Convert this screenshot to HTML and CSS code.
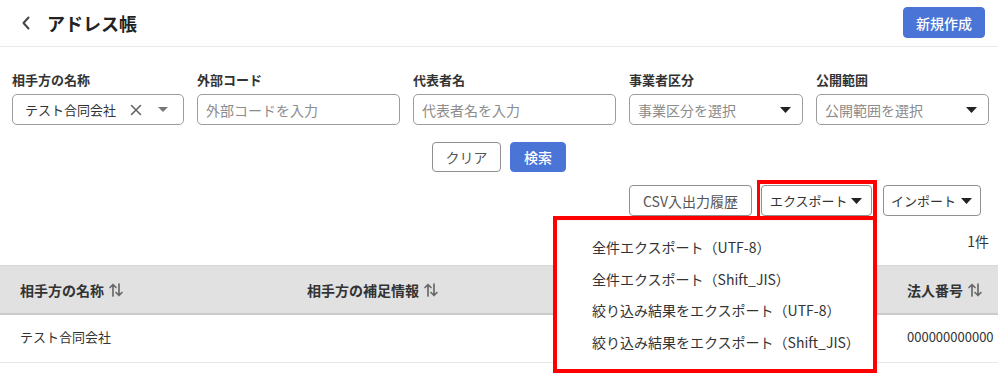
FILE: index.html
```html
<!DOCTYPE html>
<html lang="ja">
<head>
<meta charset="utf-8">
<link rel="stylesheet" href="styles.css">
</head>
<body>
<div class="page">
  <header class="topbar">
    <div class="title-wrap">
      <svg class="back" width="10" height="14" viewBox="0 0 10 14"><path d="M7.5 1.5 L2.5 7 L7.5 12.5" fill="none" stroke="#444" stroke-width="2" stroke-linecap="round" stroke-linejoin="round"/></svg>
      <h1 class="title">アドレス帳</h1>
    </div>
    <button class="btn btn-primary btn-new">新規作成</button>
  </header>

  <section class="filters">
    <div class="field">
      <label class="label">相手方の名称</label>
      <div class="input">
        <span class="value">テスト合同会社</span>
        <svg class="clear-x" width="12" height="12" viewBox="0 0 12 12"><path d="M1.5 1.5 L10.5 10.5 M10.5 1.5 L1.5 10.5" stroke="#666" stroke-width="1.6" stroke-linecap="round"/></svg>
        <svg class="caret caret-light" width="10" height="5" viewBox="0 0 10 5"><path d="M0 0 H10 L5 5 Z" fill="#777"/></svg>
      </div>
    </div>
    <div class="field">
      <label class="label">外部コード</label>
      <div class="input"><span class="ph">外部コードを入力</span></div>
    </div>
    <div class="field">
      <label class="label">代表者名</label>
      <div class="input"><span class="ph">代表者名を入力</span></div>
    </div>
    <div class="field">
      <label class="label">事業者区分</label>
      <div class="input select"><span class="ph">事業区分を選択</span>
        <svg class="caret" width="11" height="6" viewBox="0 0 11 6"><path d="M0 0 H11 L5.5 6 Z" fill="#222"/></svg>
      </div>
    </div>
    <div class="field">
      <label class="label">公開範囲</label>
      <div class="input select"><span class="ph">公開範囲を選択</span>
        <svg class="caret" width="11" height="6" viewBox="0 0 11 6"><path d="M0 0 H11 L5.5 6 Z" fill="#222"/></svg>
      </div>
    </div>
  </section>

  <div class="actions">
    <button class="btn btn-outline btn-clear">クリア</button>
    <button class="btn btn-primary btn-search">検索</button>
  </div>

  <div class="toolbar">
    <button class="btn btn-outline btn-csv">CSV入出力履歴</button>
    <button class="btn btn-outline btn-drop btn-export"><span>エクスポート</span>
      <svg width="11" height="6" viewBox="0 0 11 6"><path d="M0 0 H11 L5.5 6 Z" fill="#222"/></svg>
    </button>
    <button class="btn btn-outline btn-drop btn-import"><span>インポート</span>
      <svg width="11" height="6" viewBox="0 0 11 6"><path d="M0 0 H11 L5.5 6 Z" fill="#222"/></svg>
    </button>
  </div>

  <div class="count">1件</div>

  <div class="table">
    <div class="thead">
      <div class="th">相手方の名称 <svg class="sort" width="16" height="16" viewBox="0 0 16 16"><path d="M5 14 V2.5 M2 5.5 L5 2.5 L8 5.5 M11 2 V13.5 M8 10.5 L11 13.5 L14 10.5" fill="none" stroke="#6a6a6a" stroke-width="1.7" stroke-linecap="round" stroke-linejoin="round"/></svg></div>
      <div class="th">相手方の補足情報 <svg class="sort" width="16" height="16" viewBox="0 0 16 16"><path d="M5 14 V2.5 M2 5.5 L5 2.5 L8 5.5 M11 2 V13.5 M8 10.5 L11 13.5 L14 10.5" fill="none" stroke="#6a6a6a" stroke-width="1.7" stroke-linecap="round" stroke-linejoin="round"/></svg></div>
      <div class="th">法人番号 <svg class="sort" width="16" height="16" viewBox="0 0 16 16"><path d="M5 14 V2.5 M2 5.5 L5 2.5 L8 5.5 M11 2 V13.5 M8 10.5 L11 13.5 L14 10.5" fill="none" stroke="#6a6a6a" stroke-width="1.7" stroke-linecap="round" stroke-linejoin="round"/></svg></div>
    </div>
    <div class="tr">
      <div class="td">テスト合同会社</div>
      <div class="td"></div>
      <div class="td">000000000000</div>
    </div>
  </div>

  <ul class="menu">
    <li>全件エクスポート（UTF-8）</li>
    <li>全件エクスポート（Shift_JIS）</li>
    <li>絞り込み結果をエクスポート（UTF-8）</li>
    <li>絞り込み結果をエクスポート（Shift_JIS）</li>
  </ul>

  <div class="mark mark-btn"></div>
  <div class="mark mark-menu"></div>
</div>
</body>
</html>
```

FILE: styles.css
```css
* { box-sizing: border-box; }
html, body { margin: 0; padding: 0; background: #fff; }
body {
  font-family: "Noto Sans CJK JP", "Noto Sans", sans-serif;
  color: #333;
  font-size: 14px;
  width: 998px;
  height: 381px;
  overflow: hidden;
}
.page { position: relative; width: 998px; }

.topbar {
  height: 47px;
  border-bottom: 1px solid #e9e9e9;
  display: flex;
  align-items: center;
  justify-content: space-between;
  padding: 0 13px 0 21px;
}
.title-wrap { display: flex; align-items: center; gap: 16px; }
.back { display: block; }
.title {
  margin: 0;
  font-size: 18px;
  font-weight: 700;
  color: #222;
  line-height: 24px;
}
.btn {
  font-family: inherit;
  font-size: 14px;
  border-radius: 4px;
  height: 30px;
  padding: 0 12px;
  cursor: pointer;
  display: inline-flex;
  align-items: center;
  justify-content: center;
  line-height: 1;
  white-space: nowrap;
}
.btn-primary {
  background: #4a74d6;
  border: 1px solid #4a74d6;
  color: #fff;
  font-weight: 500;
}
.btn-outline {
  background: #fff;
  border: 1px solid #8f8f8f;
  color: #555;
}
.btn-new { width: 82px; height: 31px; margin-top: -1px; }

.filters {
  display: grid;
  grid-template-columns: 172px 203px 203px 174px 173px;
  column-gap: 13px;
  padding-left: 12px;
  margin-top: 24px;
}
.field { display: flex; flex-direction: column; }
.label {
  font-size: 13px;
  font-weight: 700;
  line-height: 18px;
  color: #333;
  margin-bottom: 5px;
}
.input {
  height: 31px;
  border: 1px solid #9c9c9c;
  border-radius: 5px;
  padding: 0 8px;
  display: flex;
  align-items: center;
  font-size: 14px;
}
.value { font-size: 13px; color: #333; padding-left: 4px; flex: 1; }
.ph { color: #8c8c8c; flex: 1; }
.clear-x { margin-right: 16px; }
.caret-light { margin-right: 7px; }
.select .caret { margin-right: 3px; }

.actions {
  display: flex;
  justify-content: center;
  gap: 9px;
  margin-top: 17px;
}
.btn-clear { width: 69px; }
.btn-search { width: 56px; }

.toolbar {
  display: flex;
  justify-content: flex-end;
  margin-top: 13px;
  padding-right: 17px;
}
.toolbar .btn { height: 31px; }
.btn-csv { width: 123px; margin-right: 9px; }
.btn-drop { font-size: 13px; color: #333; justify-content: space-between; }
.btn-export { width: 111px; margin-right: 11px; padding: 0 9px 0 8px; }
.btn-import { width: 98px; padding: 0 8px 0 7px; }

.count {
  text-align: right;
  padding-right: 9px;
  margin-top: 15px;
  line-height: 20px;
  height: 20px;
  color: #333;
}

.table { margin-top: 14px; }
.thead, .tr {
  display: grid;
  grid-template-columns: 287px 600px 111px;
}
.thead {
  background: #e1e1e1;
  height: 50px;
  border-bottom: 2px solid #cbcbcb;
  border-top: 1px solid #d6d6d6;
}
.th {
  padding-left: 20px;
  display: flex;
  align-items: center;
  gap: 4px;
  font-size: 14px;
  font-weight: 700;
  color: #333;
  white-space: nowrap;
}
.tr {
  height: 48px;
  border-bottom: 1px solid #e8e8e8;
}
.td {
  padding-left: 20px;
  padding-bottom: 5px;
  display: flex;
  align-items: center;
  font-size: 13px;
  color: #333;
  white-space: nowrap;
}

.menu {
  position: absolute;
  left: 557px;
  top: 221px;
  width: 316px;
  margin: 0;
  padding: 11px 0 12px;
  list-style: none;
  background: #fff;
  box-shadow: 0 1px 3px rgba(0,0,0,0.25);
}
.menu li {
  height: 31.5px;
  line-height: 31.5px;
  padding-left: 35px;
  font-size: 14px;
  color: #333;
  white-space: nowrap;
}

.mark {
  position: absolute;
  border: 4px solid #ff0000;
  pointer-events: none;
}
.mark-btn { left: 757px; top: 180px; width: 120px; height: 40px; border-width: 4px 4px 0 3px; }
.mark-menu { left: 553px; top: 216px; width: 324px; height: 157px; }
```
